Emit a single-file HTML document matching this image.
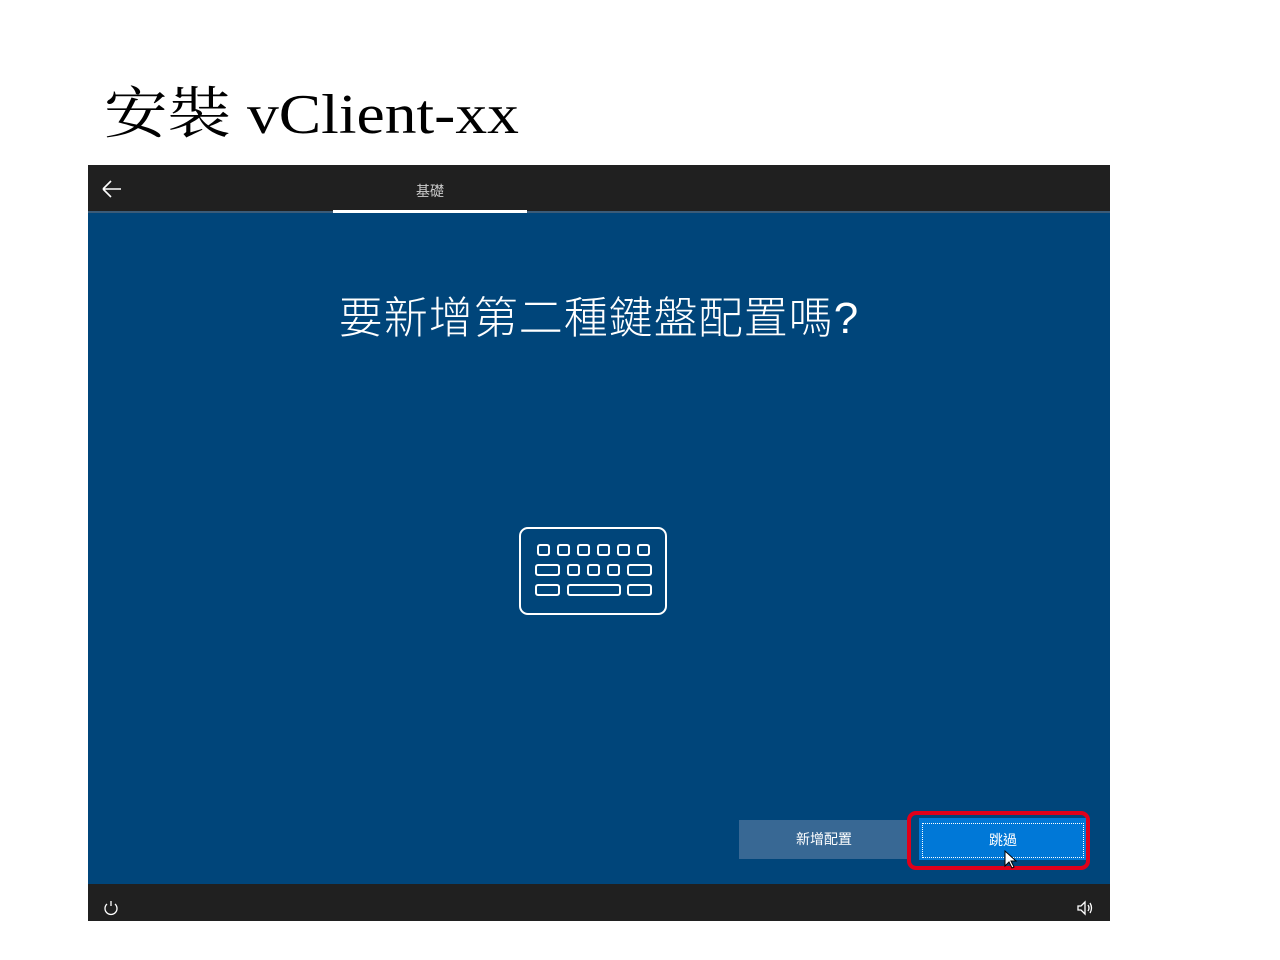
<!DOCTYPE html><html><head><meta charset="utf-8"><style>
body{margin:0;width:1280px;height:960px;background:#fff;position:relative;overflow:hidden;font-family:"Liberation Sans","Noto Sans CJK TC",sans-serif}
.a{position:absolute}
</style></head><body>
<div class="a" style="left:104px;top:70px;font:56px 'Liberation Serif','Noto Serif CJK SC',serif;color:#000;white-space:nowrap;transform:scaleX(1.135);transform-origin:0 0">安裝 vClient-xx</div>
<div class="a" style="left:88px;top:165px;width:1022px;height:756px;background:#00457a"></div>
<div class="a" style="left:88px;top:165px;width:1022px;height:46px;background:#202020"></div>
<div class="a" style="left:88px;top:211px;width:1022px;height:2px;background:#3b5b78"></div>
<div class="a" style="left:333px;top:210px;width:194px;height:3px;background:#fff"></div>
<svg class="a" style="left:100px;top:178px" width="24" height="22"><path d="M3 11H21M3 11L11 3M3 11L11 19" stroke="#fff" stroke-width="1.6" fill="none"/></svg>
<div class="a" style="left:333px;top:181px;width:194px;text-align:center;color:#ccc;font-size:14px">基礎</div>
<div class="a" style="left:88px;top:282px;width:1022px;text-align:center;color:#fff;font-size:44px;letter-spacing:1px;font-weight:300">要新增第二種鍵盤配置嗎?</div>
<svg class="a" style="left:518px;top:526px" width="152" height="92" fill="none" stroke="#fff" stroke-width="2">
<rect x="2" y="2" width="146" height="86" rx="8"/>
<rect x="20" y="19" width="11" height="10" rx="2"/><rect x="40" y="19" width="11" height="10" rx="2"/><rect x="60" y="19" width="11" height="10" rx="2"/><rect x="80" y="19" width="11" height="10" rx="2"/><rect x="100" y="19" width="11" height="10" rx="2"/><rect x="120" y="19" width="11" height="10" rx="2"/>
<rect x="18" y="39" width="23" height="10" rx="2"/><rect x="50" y="39" width="11" height="10" rx="2"/><rect x="70" y="39" width="11" height="10" rx="2"/><rect x="90" y="39" width="11" height="10" rx="2"/><rect x="110" y="39" width="23" height="10" rx="2"/>
<rect x="18" y="59" width="23" height="10" rx="2"/><rect x="50" y="59" width="52" height="10" rx="2"/><rect x="110" y="59" width="23" height="10" rx="2"/>
</svg>
<div class="a" style="left:739px;top:820px;width:170px;height:39px;background:#386894;color:#fff;font-size:14px;text-align:center;line-height:39px">新增配置</div>
<div class="a" style="left:907px;top:811px;width:175px;height:51px;border:4px solid #e0001a;border-radius:9px"></div>
<div class="a" style="left:919px;top:818px;width:167px;height:42px;background:#0078d7"></div>
<div class="a" style="left:922px;top:823px;width:160px;height:33px;border:1px dotted #fff;color:#fff;font-size:14px;text-align:center;line-height:33px">跳過</div>
<svg class="a" style="left:1004px;top:850px" width="14" height="20"><path d="M1 1V16L5 12L8 18L10 17L7 11H12Z" fill="#fff" stroke="#000"/></svg>
<div class="a" style="left:88px;top:884px;width:1022px;height:37px;background:#202020"></div>
<svg class="a" style="left:102px;top:900px" width="18" height="18" fill="none" stroke="#fff" stroke-width="1.3"><path d="M5 4A6 6 0 1 0 13 4M9 1V6"/></svg>
<svg class="a" style="left:1076px;top:900px" width="20" height="16" fill="none" stroke="#fff" stroke-width="1.3"><path d="M2 6H5L9 2V14L5 10H2Z M12 5Q14 8 12 11 M14 3Q17 8 14 13"/></svg>
</body></html>
